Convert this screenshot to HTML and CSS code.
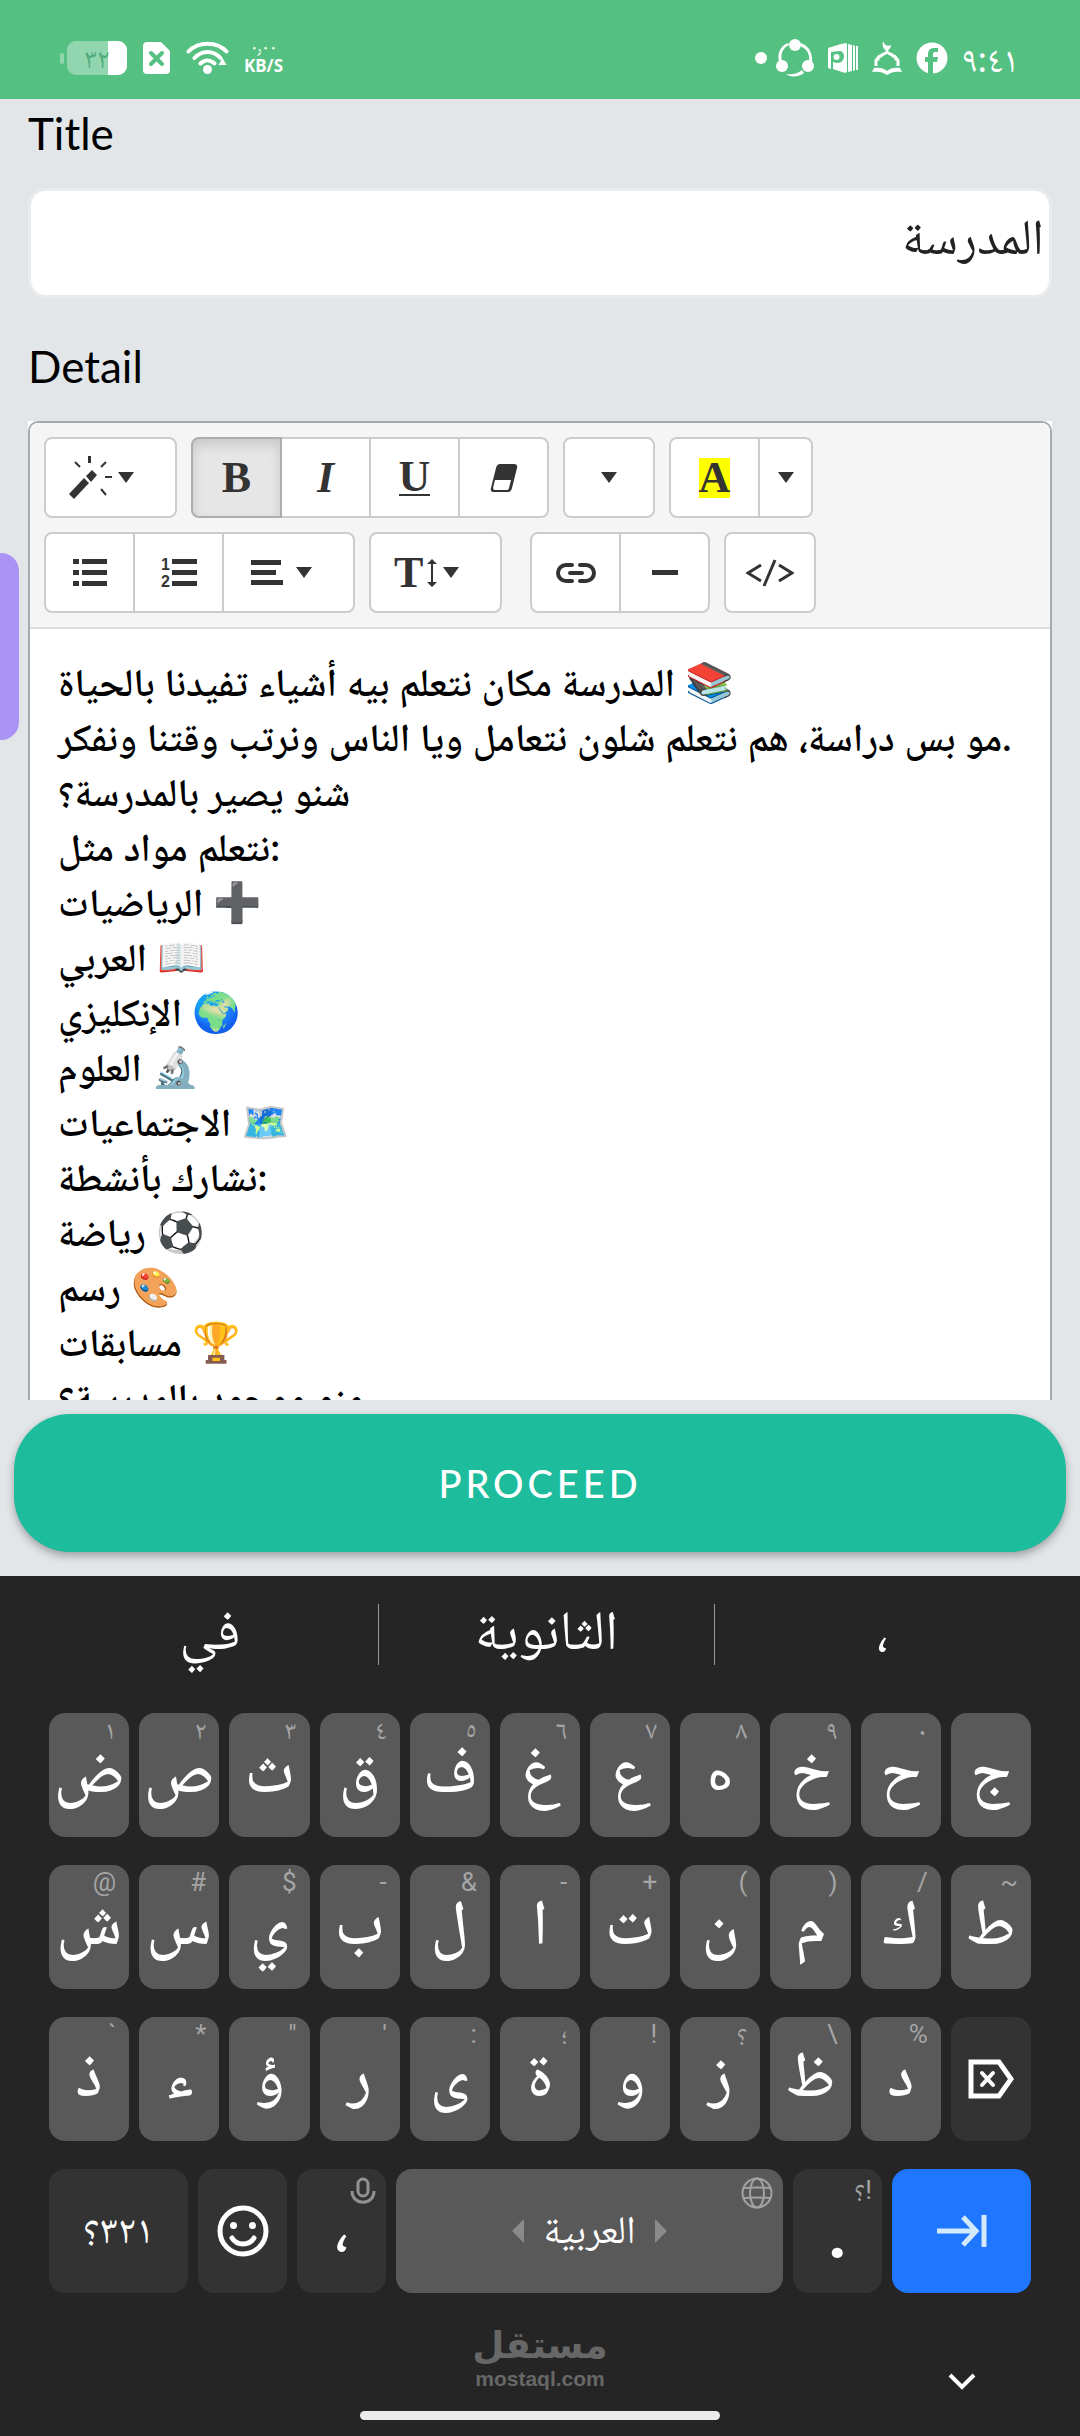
FILE: index.html
```html
<!DOCTYPE html>
<html lang="en">
<head>
    <meta charset="UTF-8">
    <meta name="viewport" content="width=device-width, initial-scale=1.0">
    <title>Title and Detail</title>
    <link rel="stylesheet" href="styles.css">
</head>
<body>
    <!-- Status bar -->
    <header class="status-bar">
        <div class="status-group">
            <svg class="battery" width="68" height="34" viewBox="0 0 68 34">
                <rect x="0" y="12" width="4" height="11" rx="2" fill="#92d6af"/>
                <rect x="7" y="0" width="60" height="34" rx="9" fill="#92d6af"/>
                <path d="M48 0h10a9 9 0 0 1 9 9v16a9 9 0 0 1-9 9H48z" fill="#fff"/>
                <text x="37" y="27" text-anchor="middle" font-size="28" fill="#53ad7a">٣٢</text>
            </svg>
            <svg width="28" height="34" viewBox="0 0 28 34">
                <path d="M4 1h14l9 9v19a4 4 0 0 1-4 4H4a4 4 0 0 1-4-4V5a4 4 0 0 1 4-4z" fill="#fff"/>
                <path d="M8 12l11 11M19 12L8 23" stroke="#54c081" stroke-width="4" stroke-linecap="round"/>
            </svg>
            <svg width="43" height="34" viewBox="0 0 43 34" fill="none" stroke="#fff" stroke-linecap="round">
                <path d="M2.500 10.500C12 0 31 0 40.500 10.500M8.500 17C16 9 27 9 34.500 17M14.500 22.500C18.500 18.500 24 18.500 28.500 22.500" stroke-width="4"/>
                <circle cx="21.500" cy="28.500" r="4.500" fill="#fff" stroke="none"/>
                <path d="M36.500 17l4 7h-8z" fill="#fff" stroke="none"/>
            </svg>
            <div class="speed">
                <span>٠٫٠٠</span>
                <b>KB/S</b>
            </div>
        </div>
        <div class="status-group status-right">
            <svg class="more-dot" width="12" height="12" viewBox="0 0 12 12"><circle cx="6" cy="6" r="6" fill="#fff"/></svg>
            <svg width="38" height="38" viewBox="0 0 38 38" fill="#fff">
                <path d="M12 4C4 7 1 15 3 23l3-1C4 15 7 9 13 6zM25 4c8 3 12 11 11 19l-3-1c1-7-2-12-9-15zM10 35c6 4 13 3 18-1l-2-3c-5 4-10 5-16 4z"/>
                <circle cx="19" cy="6" r="6"/><circle cx="6" cy="27" r="6"/><circle cx="32" cy="27" r="6"/>
            </svg>
            <svg width="30" height="30" viewBox="0 0 30 30">
                <path fill="#fff" fill-rule="evenodd" d="M0 5L13 1c4-1 6-1 6 0v28c-1 1-3 1-5 0l-9-3V19l4 1c5 0 7-3 7-7 0-3-2-5-5-5L3 9v17l-3-1z"/>
                <circle cx="8.500" cy="14" r="3" fill="#fff"/>
                <path fill="#fff" d="M20 1l4 1v26l-4 1zM25 2l2 1v24l-2 1zM28 3h2v24h-2z"/>
            </svg>
            <svg width="30" height="34" viewBox="0 0 30 34">
                <path fill="#fff" d="M11 0c-1 4 0 8 3 9h1c2 0 4-2 4-5-3 2-7 0-8-4z"/>
                <path d="M15 9v4M4 25v-5q0-2 2-2 0-3 3-3 1-2 3-2l3-2 3 2q2 0 3 2 3 0 3 3 2 0 2 2v5" fill="none" stroke="#fff" stroke-width="3"/>
                <path fill="#fff" d="M2 27c5-1 10 0 13 3 3-3 8-4 13-3l2 4c-6-1-11 0-15 3-4-3-9-4-15-3z"/>
            </svg>
            <svg width="32" height="32" viewBox="0 0 32 32">
                <circle cx="16" cy="16" r="15.500" fill="#fff"/>
                <path fill="#54c081" d="M12 32V20H9v-5h3v-3c0-4 3-6 6-6h4v4h-3c-2 0-2 1-2 3v2h5l-1 5h-4v12z"/>
            </svg>
            <time class="clock">٩:٤١</time>
        </div>
    </header>

    <!-- Form -->
    <main class="form">
        <label for="title">Title</label>
        <input class="title-input" type="text" id="title" dir="rtl" value="المدرسة">
        <label id="detail-label">Detail</label>
        <div class="editor">
            <div class="editor-frame">
                <div class="toolbar">
                    <div class="toolbar-row">
                        <div class="btn-group">
                            <button class="btn btn-wide" aria-label="Style">
                                <svg width="44" height="44" viewBox="0 0 44 44" fill="#333">
                                    <path d="M0 38L15 22l5 5L5 43zM17 20l6-6 5 5-6 7zM19 0h3v7h-3zM36 20h7v2h-7z"/>
                                    <path d="M6 6l5 5M37 6l-5 5M32 33l5 6" stroke="#333" stroke-width="2"/>
                                </svg>
                                <i class="caret"></i>
                            </button>
                        </div>
                        <div class="btn-group">
                            <button class="btn btn-active" aria-pressed="true" aria-label="Bold"><b>B</b></button>
                            <button class="btn" aria-label="Italic"><b><em>I</em></b></button>
                            <button class="btn" aria-label="Underline"><b class="underlined">U</b></button>
                            <button class="btn" aria-label="Remove style">
                                <svg width="28" height="30" viewBox="0 0 28 30">
                                    <path d="M10 1h14q4 0 3 4l-5 20q-1 4-4 4H4q-4 0-3-4L6 5q1-4 4-4z" fill="#333"/>
                                    <path d="M5 17h16l-2 8q0 2-2 2H5q-2 0-2-2z" fill="#fff"/>
                                </svg>
                            </button>
                        </div>
                        <div class="btn-group">
                            <button class="btn" aria-label="Font family"><i class="caret"></i></button>
                        </div>
                        <div class="btn-group">
                            <button class="btn" aria-label="Recent color"><b class="highlight">A</b></button>
                            <button class="btn btn-narrow" aria-label="More color"><i class="caret"></i></button>
                        </div>
                    </div>
                    <div class="toolbar-row">
                        <div class="btn-group">
                            <button class="btn" aria-label="Unordered list">
                                <svg width="34" height="30" viewBox="0 0 34 30" fill="#333">
                                    <path d="M0 1h6v5H0zM9 1h25v5H9zM0 12h6v5H0zM9 12h25v5H9zM0 23h6v5H0zM9 23h25v5H9z"/>
                                </svg>
                            </button>
                            <button class="btn" aria-label="Ordered list">
                                <svg class="numbers" width="36" height="30" viewBox="0 0 36 30" fill="#333">
                                    <path d="M11 1h25v5H11zM11 12h25v5H11zM11 23h25v5H11z"/>
                                    <text x="0" y="12" font-size="16">1</text>
                                    <text x="0" y="29" font-size="16">2</text>
                                </svg>
                            </button>
                            <button class="btn btn-wide" aria-label="Paragraph">
                                <svg width="44" height="30" viewBox="0 0 44 30" fill="#333">
                                    <path d="M4 2h30v5H4zM4 12h25v5H4zM4 22h32v5H4z"/>
                                </svg>
                                <i class="caret"></i>
                            </button>
                        </div>
                        <div class="btn-group btn-group-gap">
                            <button class="btn btn-wide" aria-label="Font size">
                                <span class="size-icon"><b>T</b>
                                    <svg width="10" height="28" viewBox="0 0 10 28">
                                        <path d="M5 0l5 5H6v18h4l-5 5-5-5h4V5H0z" fill="#333"/>
                                    </svg>
                                </span>
                                <i class="caret"></i>
                            </button>
                        </div>
                        <div class="btn-group">
                            <button class="btn" aria-label="Link">
                                <svg width="40" height="20" viewBox="0 0 40 20" fill="none" stroke="#333" stroke-width="4" stroke-linecap="round">
                                    <path d="M16 2h-6a8 8 0 0 0 0 16h6M24 2h6a8 8 0 0 1 0 16h-6M14 10h12"/>
                                </svg>
                            </button>
                            <button class="btn" aria-label="Horizontal rule">
                                <svg width="26" height="6" viewBox="0 0 26 6"><path d="M0 0h26v5H0z" fill="#333"/></svg>
                            </button>
                        </div>
                        <div class="btn-group">
                            <button class="btn" aria-label="Code view">
                                <svg width="48" height="28" viewBox="0 0 48 28" fill="none" stroke="#333" stroke-width="3">
                                    <path d="M15 6L2 14l13 8M29 1L18 27M33 6l13 8-13 8"/>
                                </svg>
                            </button>
                        </div>
                    </div>
                </div>
                <div class="editable" contenteditable="true" role="textbox" aria-labelledby="detail-label">
                    <p>المدرسة مكان نتعلم بيه أشياء تفيدنا بالحياة 📚</p>
                    <p>مو بس دراسة، هم نتعلم شلون نتعامل ويا الناس ونرتب وقتنا ونفكر.</p>
                    <p>شنو يصير بالمدرسة؟</p>
                    <p>نتعلم مواد مثل:</p>
                    <p>الرياضيات ➕</p>
                    <p>العربي 📖</p>
                    <p>الإنكليزي 🌍</p>
                    <p>العلوم 🔬</p>
                    <p>الاجتماعيات 🗺️</p>
                    <p>نشارك بأنشطة:</p>
                    <p>رياضة ⚽</p>
                    <p>رسم 🎨</p>
                    <p>مسابقات 🏆</p>
                    <p>منو موجود بالمدرسة؟</p>
                </div>
            </div>
        </div>
    </main>
    <div class="actions">
        <button class="proceed">PROCEED</button>
    </div>
    <div class="edge-handle"></div>

    <!-- Keyboard -->
    <section class="keyboard" lang="ar">
        <div class="suggestions">
            <button>في</button>
            <button>الثانوية</button>
            <button>،</button>
        </div>
        <div class="keys">
            <button class="key"><small>١</small>ض</button>
            <button class="key"><small>٢</small>ص</button>
            <button class="key"><small>٣</small>ث</button>
            <button class="key"><small>٤</small>ق</button>
            <button class="key"><small>٥</small>ف</button>
            <button class="key"><small>٦</small>غ</button>
            <button class="key"><small>٧</small>ع</button>
            <button class="key key-heh"><small>٨</small>ه</button>
            <button class="key"><small>٩</small>خ</button>
            <button class="key"><small>٠</small>ح</button>
            <button class="key">ج</button>

            <button class="key"><small>@</small>ش</button>
            <button class="key"><small>#</small>س</button>
            <button class="key"><small>$</small>ي</button>
            <button class="key"><small>-</small>ب</button>
            <button class="key"><small>&amp;</small>ل</button>
            <button class="key"><small>-</small>ا</button>
            <button class="key"><small>+</small>ت</button>
            <button class="key"><small>(</small>ن</button>
            <button class="key"><small>)</small>م</button>
            <button class="key"><small>/</small>ك</button>
            <button class="key"><small>~</small>ط</button>

            <button class="key"><small>`</small>ذ</button>
            <button class="key"><small>*</small>ء</button>
            <button class="key"><small>"</small>ؤ</button>
            <button class="key"><small>'</small>ر</button>
            <button class="key"><small>:</small>ى</button>
            <button class="key"><small>؛</small>ة</button>
            <button class="key"><small>!</small>و</button>
            <button class="key"><small>؟</small>ز</button>
            <button class="key"><small>\</small>ظ</button>
            <button class="key"><small>%</small>د</button>
            <button class="key key-dark key-icon" aria-label="Backspace">
                <svg width="46" height="40" viewBox="0 0 46 40" fill="none" stroke="#fff">
                    <path d="M3 3h28l12 17-12 17H3z" stroke-width="5"/>
                    <path d="M14 14l11 12M25 14L14 26" stroke-width="4" stroke-linecap="round"/>
                </svg>
            </button>
        </div>
        <div class="keys keys-bottom">
            <button class="key key-dark key-mode" dir="rtl">٣٢١؟</button>
            <button class="key key-dark key-icon" aria-label="Emoji">
                <svg width="52" height="52" viewBox="0 0 52 52" fill="none" stroke="#fff" stroke-width="5">
                    <circle cx="26" cy="26" r="23"/>
                    <path d="M15 33c5 8 17 8 22 0" stroke-linecap="round"/>
                    <circle cx="16.500" cy="20.500" r="3.500" fill="#fff" stroke="none"/>
                    <circle cx="35.500" cy="20.500" r="3.500" fill="#fff" stroke="none"/>
                </svg>
            </button>
            <button class="key key-dark">
                <small>
                    <svg width="26" height="28" viewBox="0 0 26 28" fill="none" stroke="#929292" stroke-width="3">
                        <rect x="8" y="2" width="10" height="17" rx="5"/>
                        <path d="M2 14c0 15 22 15 22 0"/>
                    </svg>
                </small>
                ،
            </button>
            <button class="key key-space">
                <small>
                    <svg width="32" height="32" viewBox="0 0 32 32" fill="none" stroke="#a2a2a2" stroke-width="2">
                        <circle cx="16" cy="16" r="14.500"/>
                        <ellipse cx="16" cy="16" rx="7" ry="14.500"/>
                        <path d="M3 11q13-1 26 0M3 21q13-1 26 0"/>
                    </svg>
                </small>
                <svg width="12" height="24" viewBox="0 0 12 24"><path d="M12 0v24L0 12z" fill="#8a8a8a"/></svg>
                <span>العربية</span>
                <svg width="12" height="24" viewBox="0 0 12 24"><path d="M0 0v24l12-12z" fill="#8a8a8a"/></svg>
            </button>
            <button class="key key-dark key-dot"><small>؟!</small>.</button>
            <button class="key key-enter key-icon" aria-label="Next">
                <svg width="50" height="34" viewBox="0 0 50 34" fill="none" stroke="#d3e9fc" stroke-width="5">
                    <path d="M0 17h38M26 3l13 14-13 14M47 1v32"/>
                </svg>
            </button>
        </div>
        <footer class="nav">
            <a class="brand" href="#"><b>مستقل</b><span>mostaql.com</span></a>
            <button class="hide-keyboard" aria-label="Hide keyboard">
                <svg width="28" height="18" viewBox="0 0 28 18"><path d="M2 2l12 12L26 2" fill="none" stroke="#fff" stroke-width="4"/></svg>
            </button>
        </footer>
        <div class="home-bar"></div>
    </section>
</body>
</html>
```
FILE: styles.css
```css
* {
    box-sizing: border-box;
}

body {
    margin: 0;
    height: 100vh;
    display: flex;
    flex-direction: column;
    overflow: hidden;
    background-color: #e2e6e9;
    color: #000;
    font-family: "Lato", "Noto Naskh Arabic", "Noto Sans Arabic", "DejaVu Sans", sans-serif;
}

button {
    font-family: inherit;
    color: inherit;
    border: none;
    background: none;
    padding: 0;
    cursor: pointer;
}

svg {
    display: block;
}

/* Status bar */
.status-bar {
    flex: none;
    height: 99px;
    padding: 16px 61px 0 60px;
    display: flex;
    justify-content: space-between;
    align-items: center;
    background-color: #54c081;
    color: #fff;
}

.status-group {
    display: flex;
    align-items: center;
    gap: 15px;
}

.status-right {
    gap: 14px;
}

.more-dot {
    margin-right: -5px;
}

.speed {
    display: flex;
    flex-direction: column;
    align-items: center;
    padding-bottom: 4px;
    font-family: "Noto Sans", "Noto Naskh Arabic", sans-serif;
    font-size: 17px;
    line-height: 20px;
}

.clock {
    font-size: 36px;
    line-height: 40px;
}

/* Form */
.form {
    flex: 1;
    min-height: 0;
    overflow: hidden;
    padding: 6px 28px 0;
    display: flex;
    flex-direction: column;
}

.form label {
    flex: none;
    font-size: 44px;
    line-height: 56px;
    margin-bottom: 27px;
}

.title-input {
    flex: none;
    width: 100%;
    height: 110px;
    margin-bottom: 40px;
    padding: 0 5px;
    border: 3px solid #ebebeb;
    border-radius: 18px;
    background-color: #fff;
    color: #222;
    font-family: inherit;
    font-size: 50px;
}

.editor {
    flex: 1;
    min-height: 0;
    overflow: hidden;
    background-color: #fff;
}

.editor-frame {
    border: 2px solid #a9a9a9;
    border-radius: 10px;
}

.toolbar {
    display: flex;
    flex-direction: column;
    gap: 14px;
    padding: 14px;
    border-bottom: 2px solid #ddd;
    border-radius: 8px 8px 0 0;
    background-color: #f5f5f5;
}

.toolbar-row {
    display: flex;
    gap: 14px;
}

.btn-group {
    display: flex;
}

.btn-group-gap {
    margin-right: 14px;
}

.btn {
    width: 91px;
    height: 81px;
    display: flex;
    align-items: center;
    justify-content: center;
    border: 2px solid #ccc;
    background-color: #fff;
    color: #333;
    font-family: "Liberation Serif", serif;
    font-size: 44px;
    line-height: 44px;
}

.btn + .btn {
    margin-left: -2px;
}

.btn:first-child {
    border-top-left-radius: 8px;
    border-bottom-left-radius: 8px;
}

.btn:last-child {
    border-top-right-radius: 8px;
    border-bottom-right-radius: 8px;
}

.btn:only-child {
    width: 92px;
}

.btn-wide,
.btn-wide:only-child {
    width: 133px;
    padding-left: 23px;
    justify-content: flex-start;
    gap: 5px;
}

.btn-narrow {
    width: 55px;
}

.btn-active {
    z-index: 1;
    border-color: #adadad;
    background-color: #e6e6e6;
    box-shadow: inset 0 6px 12px rgba(0, 0, 0, 0.13);
}

.caret {
    border-top: 11px solid #333;
    border-left: 8px solid transparent;
    border-right: 8px solid transparent;
}

.underlined {
    line-height: 34px;
    border-bottom: 2px solid #333;
}

.highlight {
    line-height: 40px;
    background-color: #ff0;
}

.size-icon {
    width: 44px;
    display: flex;
    align-items: center;
    gap: 4px;
}

.numbers {
    font-family: "Liberation Sans", sans-serif;
    font-weight: bold;
}

.editable {
    padding: 25px 28px;
    outline: none;
    font-size: 39px;
    font-weight: 600;
}

.editable p {
    margin: 0;
    height: 55px;
    line-height: 55px;
    white-space: nowrap;
}

.actions {
    flex: none;
    padding: 14px 14px 24px;
}

.proceed {
    width: 100%;
    height: 138px;
    border-radius: 56px;
    background-color: #1cbc9c;
    box-shadow: 0 4px 8px rgba(0, 0, 0, 0.3);
    color: #fff;
    font-size: 38px;
    font-weight: 500;
    letter-spacing: 4px;
}

/* Handle pinned over the left screen edge */
.edge-handle {
    position: absolute;
    left: 0;
    top: 553px;
    width: 19px;
    height: 187px;
    border-radius: 0 18px 18px 0;
    background-color: #ab92f5;
}

/* Keyboard */
.keyboard {
    flex: none;
    padding: 28px 49px 16px;
    background-color: #252525;
    color: #fff;
}

.suggestions {
    display: grid;
    grid-template-columns: repeat(3, 1fr);
    margin: 0 -19px 48px -7px;
}

.suggestions button {
    height: 61px;
    padding-bottom: 12px;
    font-size: 55px;
    line-height: 49px;
}

.suggestions button + button {
    border-left: 1px solid #999;
}

.keys {
    display: grid;
    grid-template-columns: repeat(11, 1fr);
    gap: 28px 10px;
    margin-bottom: 28px;
}

.keys-bottom {
    grid-template-columns: 139fr 89fr 89fr 387fr 89fr 139fr;
    margin-bottom: 32px;
}

.key {
    position: relative;
    height: 124px;
    padding-bottom: 14px;
    display: flex;
    align-items: center;
    justify-content: center;
    border-radius: 16px;
    background-color: #595959;
    font-size: 64px;
    font-weight: 500;
    line-height: 60px;
}

.key small {
    position: absolute;
    top: 4px;
    right: 13px;
    color: #a5a5a5;
    font-family: "Roboto", "Noto Naskh Arabic", "Noto Sans Arabic", "DejaVu Sans", sans-serif;
    font-size: 26px;
    font-weight: 400;
    line-height: 26px;
}

/* DejaVu has the round form of the lone heh */
.key-heh {
    padding-bottom: 6px;
    font-family: "DejaVu Sans", sans-serif;
    font-size: 50px;
}

.key-dark {
    background-color: #333;
}

.key-icon {
    padding-bottom: 0;
}

.key-mode {
    padding-bottom: 6px;
    font-size: 40px;
    font-weight: 400;
}

.key-space {
    padding-bottom: 0;
    gap: 20px;
    font-size: 39px;
    font-weight: 400;
}

.key-space span {
    padding-bottom: 6px;
}

.key-space small,
.key-dark small {
    top: 8px;
    right: 10px;
}

.key-dot {
    padding-bottom: 0;
    font-family: "Roboto", sans-serif;
    font-size: 80px;
}

.key-enter {
    background-color: #1f76ff;
}

.nav {
    display: grid;
    grid-template-columns: 1fr auto 1fr;
    align-items: end;
    margin-bottom: 20px;
}

.brand {
    grid-column: 2;
    display: flex;
    flex-direction: column;
    align-items: center;
    color: #676767;
    font-family: "Liberation Sans", "DejaVu Sans", sans-serif;
    font-size: 21px;
    font-weight: bold;
    line-height: 24px;
    text-decoration: none;
}

.brand b {
    font-size: 37px;
    line-height: 42px;
}

.hide-keyboard {
    justify-self: end;
    margin-right: 55px;
}

.home-bar {
    width: 360px;
    height: 9px;
    margin: 0 auto;
    border-radius: 5px;
    background-color: #ebebeb;
}
```
